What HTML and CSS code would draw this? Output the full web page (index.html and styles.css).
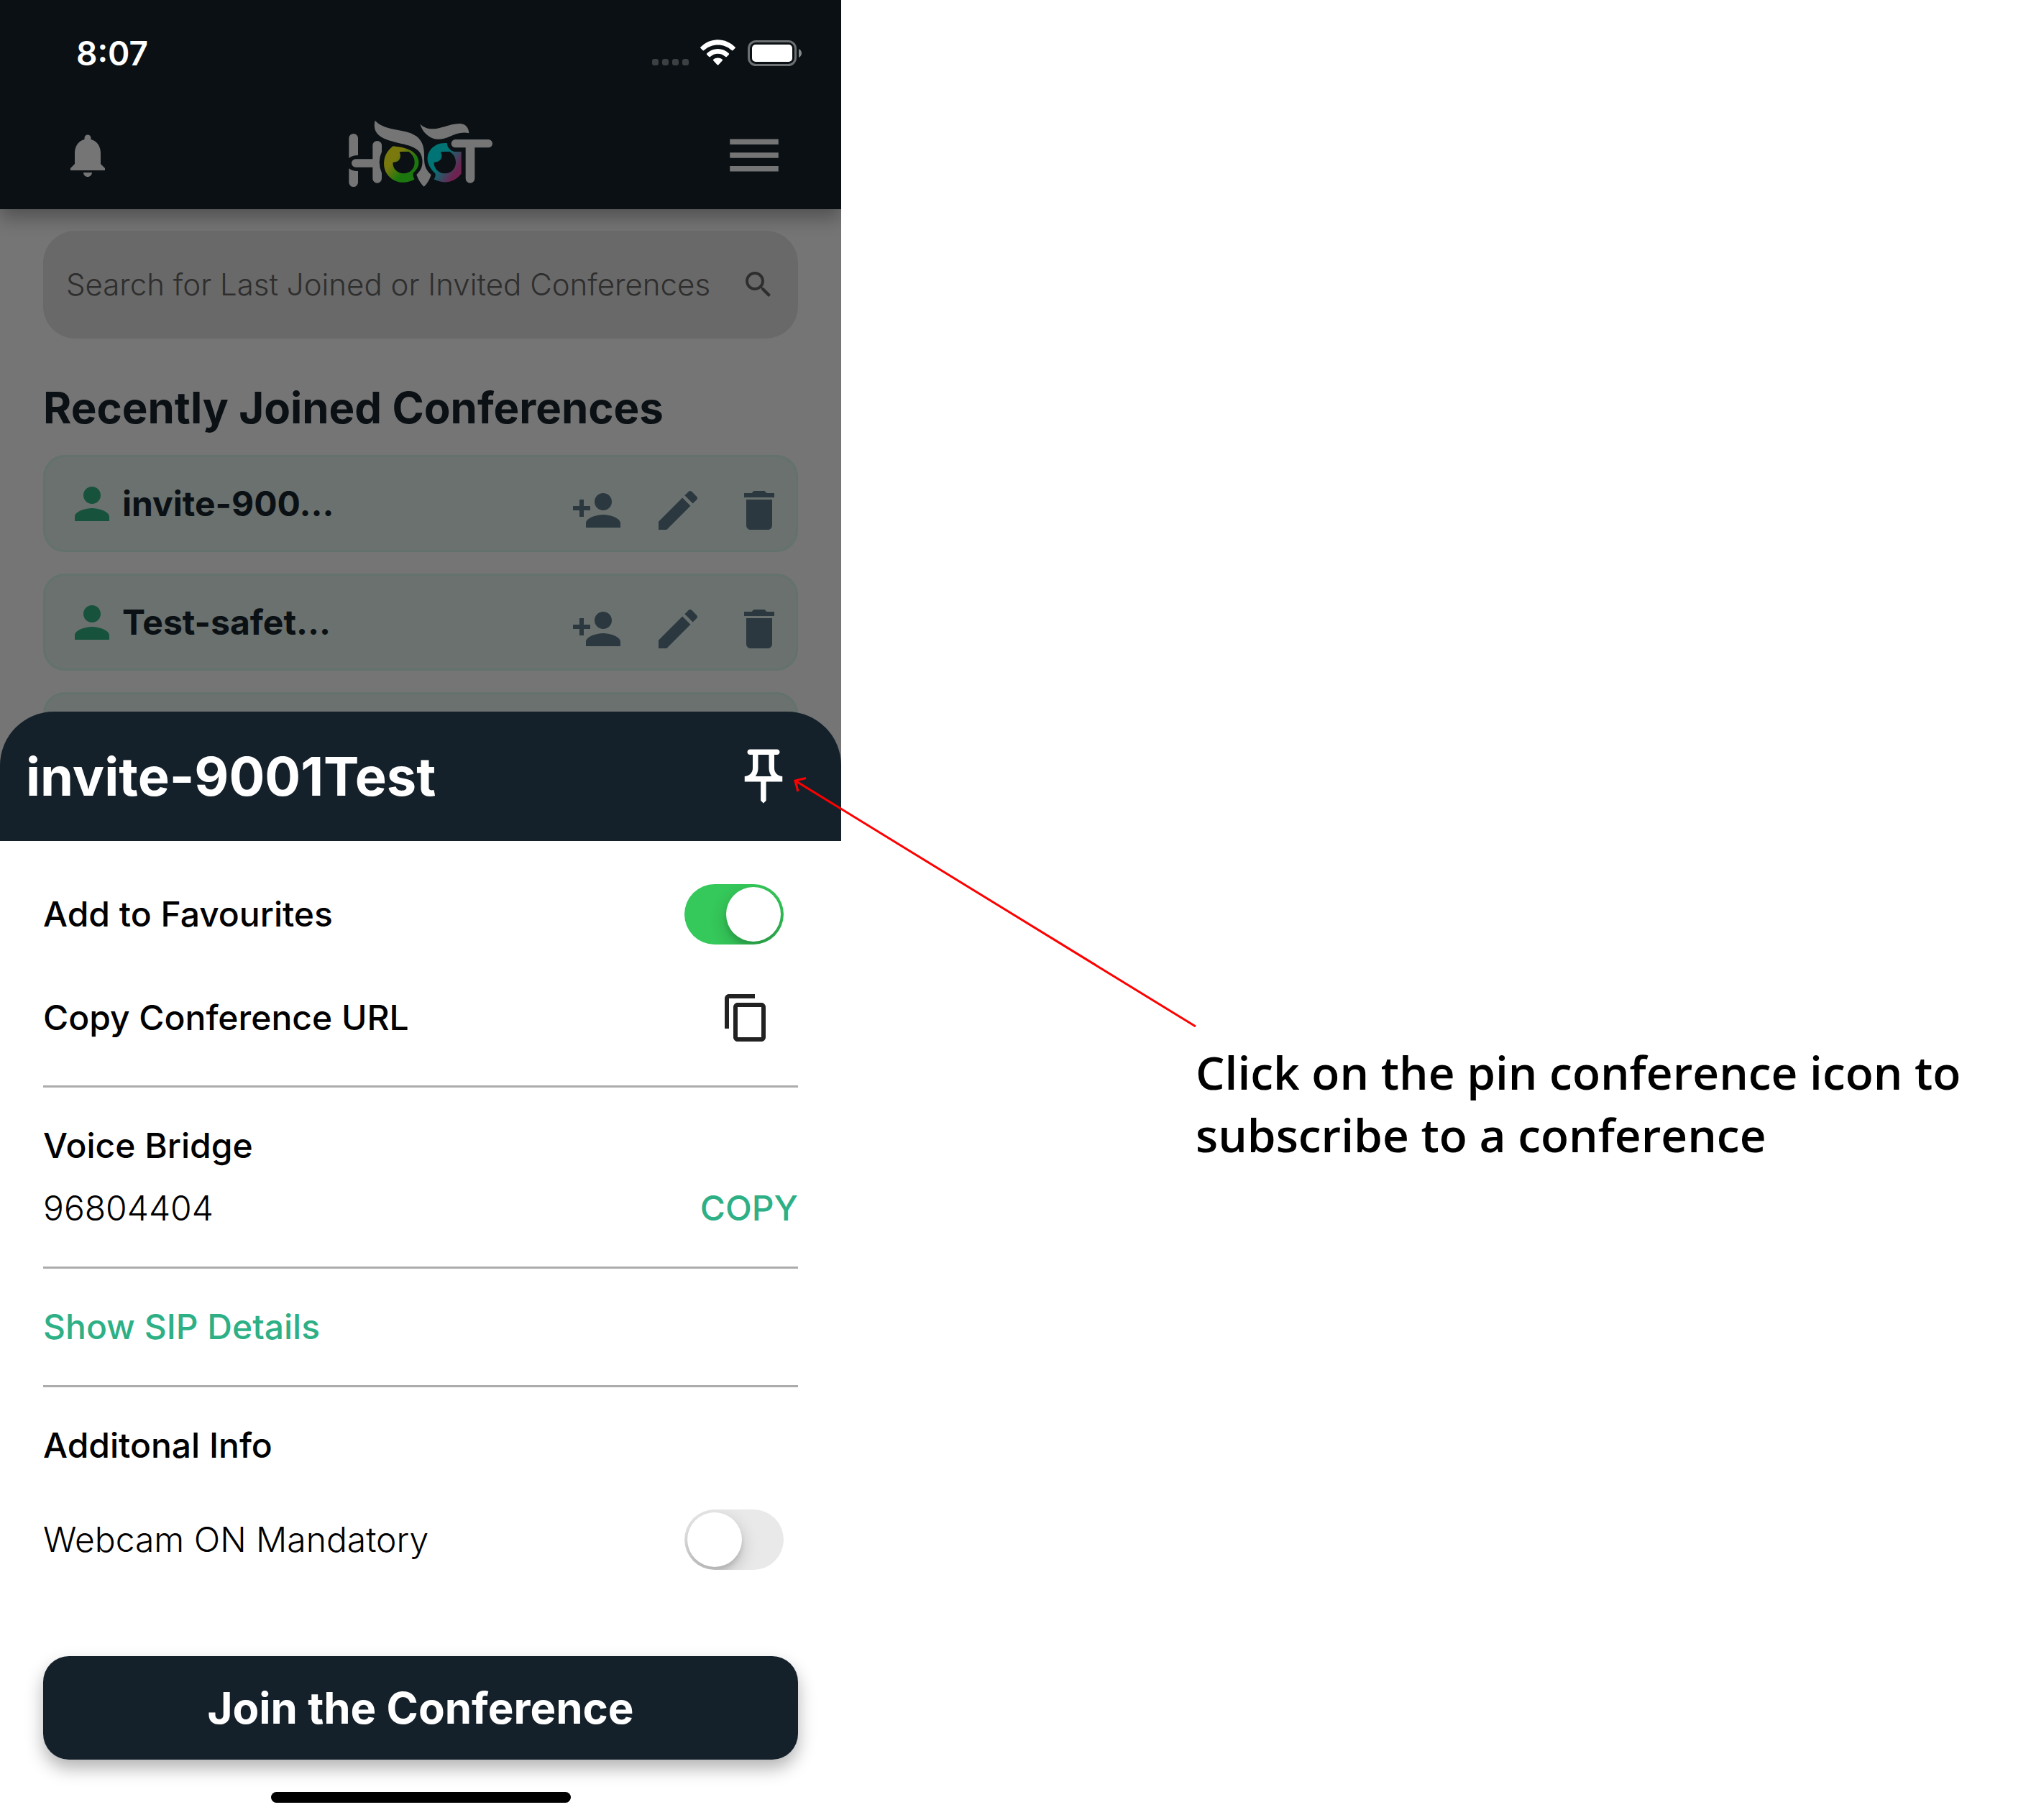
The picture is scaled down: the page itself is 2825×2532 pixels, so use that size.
FILE: index.html
```html
<!DOCTYPE html>
<html lang="en">
<head>
<meta charset="utf-8">
<meta name="viewport" content="width=device-width, initial-scale=1">
<title>Hoot – Pin a conference</title>
<link rel="stylesheet" href="styles.css">
</head>
<body>
<svg class="symbols" aria-hidden="true">
  <symbol id="person" viewBox="0 0 24 24"><path d="M12 12c2.21 0 4-1.79 4-4s-1.79-4-4-4-4 1.79-4 4 1.79 4 4 4zm0 2c-2.67 0-8 1.34-8 4v2h16v-2c0-2.66-5.33-4-8-4z"/></symbol>
  <symbol id="person-add" viewBox="0 0 24 24"><path d="M15 12c2.21 0 4-1.79 4-4s-1.79-4-4-4-4 1.79-4 4 1.79 4 4 4zm-9-2V7H4v3H1v2h3v3h2v-3h3v-2H6zm9 4c-2.67 0-8 1.34-8 4v2h16v-2c0-2.66-5.33-4-8-4z"/></symbol>
  <symbol id="edit" viewBox="0 0 24 24"><path d="M3 17.25V21h3.75L17.81 9.94l-3.75-3.75L3 17.25zM20.71 7.04c.39-.39.39-1.02 0-1.41l-2.34-2.34c-.39-.39-1.02-.39-1.41 0l-1.83 1.83 3.75 3.75 1.83-1.83z"/></symbol>
  <symbol id="delete" viewBox="0 0 24 24"><path d="M6 19c0 1.1.9 2 2 2h8c1.1 0 2-.9 2-2V7H6v12zM19 4h-3.500l-1-1h-5l-1 1H5v2h14V4z"/></symbol>
</svg>
<main class="page">
  <div class="phone">
    <div class="app">
      <header class="topbar">
        <div class="status">
          <span class="time">8:07</span>
          <svg class="status-icons" viewBox="0 0 210 40" aria-hidden="true">
            <g fill="#3c4042"><rect x="1" y="28" width="9" height="9" rx="3"/><rect x="15" y="28" width="9" height="9" rx="3"/><rect x="29" y="28" width="9" height="9" rx="3"/><rect x="43" y="28" width="9" height="9" rx="3"/></g>
            <g fill="#fff">
              <path d="M68.500 11.500C82 -2.300 103 -2.300 116.500 11.500q.8 .8 0 1.600l-3 3q-.8 .8-1.600 0C101 5.800 84 5.800 73.100 16.100q-.8 .8-1.600 0l-3-3q-.8-.8 0-1.600z"/>
              <path d="M77.200 20.300C86 12 99 12 107.800 20.300q.8 .8 0 1.600l-3 3q-.8 .8-1.600 0C97 19.200 88 19.200 81.800 24.900q-.8 .8-1.600 0l-3-3q-.8-.8 0-1.600z"/>
              <path d="M86.200 28.700c3.600-3 9-3 12.600 0q.8 .8 0 1.600l-5.500 5.900q-.8 .8-1.600 0l-5.500-5.900q-.8-.8 0-1.600z"/>
              <rect x="140" y="8" width="56" height="24" rx="5"/>
            </g>
            <rect x="135.500" y="3.500" width="65" height="33" rx="10" fill="none" stroke="#6c7072" stroke-width="3"/>
            <path d="M205 14q4 2 4 6t-4 6z" fill="#858889"/>
          </svg>
        </div>
        <div class="nav">
          <button class="icon-button nav-start" type="button" aria-label="Notifications">
            <svg class="icon" viewBox="0 0 24 24"><path d="M12 22c1.100 0 2-.9 2-2h-4c0 1.100.89 2 2 2zm6-6v-5c0-3.070-1.640-5.640-4.500-6.320V4c0-.83-.67-1.500-1.500-1.500s-1.500.67-1.500 1.500v.68C7.630 5.360 6 7.920 6 11v5l-2 2v1h16v-1l-2-2z"/></svg>
          </button>
          <svg class="logo" viewBox="74 48 606 300" role="img" aria-label="Hoot">
            <defs>
              <linearGradient id="eye-left" gradientUnits="userSpaceOnUse" x1="250" y1="200" x2="345" y2="280"><stop offset="0.200" stop-color="#79790d"/><stop offset="0.700" stop-color="#1c780e"/></linearGradient>
              <linearGradient id="eye-right" gradientUnits="userSpaceOnUse" x1="430" y1="200" x2="535" y2="265"><stop offset="0.300" stop-color="#007475"/><stop offset="0.950" stop-color="#6e2250"/></linearGradient>
            </defs>
            <g fill="#757575">
              <path d="M78 127a19 19 0 0 1 38 0V198q-24 0-38 12z"/>
              <path d="M78 253q14 12 38 11V311a19 19 0 0 1-38 0z"/>
              <path d="M106 214H177V157a19 19 0 0 1 38 0V184q-20 43 0 88V295a19 19 0 0 1-38 0V248H106a17 17 0 0 1 0-34z"/>
              <path d="M187 53C210 78 240 84 283 93C345 103 392 120 392 195V215C393 245 402 262 421 279C414 302 405 316 391 329C377 316 367 299 360 279C379 261 387 243 384 215C379 160 318 155 270 143C215 131 173 108 187 53z"/>
              <path d="M375 68C395 86 417 91 447 86C490 77 510 65 543 66C566 68 578 84 579 106C550 99 525 109 500 119C465 135 432 136 409 117C391 103 382 89 375 68z"/>
              <path d="M522 132H660a17 17 0 0 1 0 34H603V295a19 19 0 0 1-38 0V166H522a17 17 0 0 1 0-34z"/>
            </g>
            <path fill="url(#eye-left)" fill-rule="evenodd" d="M262 160C310 164 345 176 362 202C376 228 370 252 346 272Q343 286 352 298C330 312 300 316 274 306C235 290 220 255 225 220C229 193 243 175 262 160zM289 185C299 206 289 228 262 227C258 251 280 274 306 274C334 274 352 253 352 228C352 208 342 193 327 183H302Q295 182 289 185z"/>
            <path fill="url(#eye-right)" fill-rule="evenodd" d="M487 147Q488 172 516 183H547V275C520 309 476 322 432 298Q442 288 438 274C403 240 396 204 419 174C434 155 458 145 487 147zM461 185C472 206 460 228 433 227C431 252 452 274 479 274C505 274 524 253 524 228C524 208 514 192 498 183H474Q466 182 461 185z"/>
          </svg>
          <button class="icon-button nav-end" type="button" aria-label="Menu">
            <svg class="icon icon-large" viewBox="0 0 24 24"><path d="M3 18h18v-2H3v2zm0-5h18v-2H3v2zm0-7v2h18V6H3z"/></svg>
          </button>
        </div>
      </header>
      <div class="content">
        <label class="search">
          <input class="search-input" type="text" aria-label="Search conferences" placeholder="Search for Last Joined or Invited Conferences">
          <svg class="icon icon-small" viewBox="0 0 24 24" aria-hidden="true"><path d="M15.500 14h-.79l-.28-.27C15.410 12.590 16 11.110 16 9.500 16 5.910 13.090 3 9.500 3S3 5.910 3 9.500 5.910 16 9.500 16c1.610 0 3.090-.59 4.230-1.570l.27.28v.79l5 4.990L20.490 19l-4.990-5zm-6 0C7.010 14 5 11.990 5 9.500S7.010 5 9.500 5 14 7.010 14 9.500 11.990 14 9.500 14z"/></svg>
        </label>
        <h2 class="heading">Recently Joined Conferences</h2>
        <ul class="list">
          <li class="row">
            <svg class="icon avatar" aria-hidden="true"><use href="#person"/></svg>
            <span class="row-name">invite-900...</span>
            <span class="actions">
              <button class="icon-button" type="button" aria-label="Add person"><svg class="icon"><use href="#person-add"/></svg></button>
              <button class="icon-button" type="button" aria-label="Edit"><svg class="icon"><use href="#edit"/></svg></button>
              <button class="icon-button" type="button" aria-label="Delete"><svg class="icon"><use href="#delete"/></svg></button>
            </span>
          </li>
          <li class="row">
            <svg class="icon avatar" aria-hidden="true"><use href="#person"/></svg>
            <span class="row-name">Test-safet...</span>
            <span class="actions">
              <button class="icon-button" type="button" aria-label="Add person"><svg class="icon"><use href="#person-add"/></svg></button>
              <button class="icon-button" type="button" aria-label="Edit"><svg class="icon"><use href="#edit"/></svg></button>
              <button class="icon-button" type="button" aria-label="Delete"><svg class="icon"><use href="#delete"/></svg></button>
            </span>
          </li>
          <li class="row"></li>
        </ul>
      </div>
    </div>
    <section class="sheet">
      <header class="sheet-header">
        <h1 class="sheet-title">invite-9001Test</h1>
        <button class="icon-button pin" type="button" aria-label="Pin conference">
          <svg class="icon icon-large" viewBox="0 0 24 24"><path d="M14 4v5c0 1.120.37 2.160 1 3H9c.65-.86 1-1.900 1-3V4h4m3-2H7c-.55 0-1 .45-1 1s.45 1 1 1h1v5c0 1.660-1.340 3-3 3v2h5.970v7l1 1 1-1v-7H19v-2c-1.660 0-3-1.340-3-3V4h1c.55 0 1-.45 1-1s-.45-1-1-1z"/></svg>
        </button>
      </header>
      <div class="sheet-body">
        <div class="section section-first">
          <div class="line line-inset">
            <label class="label" for="favourite">Add to Favourites</label>
            <input class="toggle" id="favourite" type="checkbox" checked>
          </div>
          <div class="line line-copy">
            <span class="label">Copy Conference URL</span>
            <button class="icon-button" type="button" aria-label="Copy conference URL">
              <svg class="icon" viewBox="0 0 24 24"><path d="M16 1H4c-1.100 0-2 .9-2 2v14h2V3h12V1zm3 4H8c-1.100 0-2 .9-2 2v14c0 1.100.9 2 2 2h11c1.100 0 2-.9 2-2V7c0-1.100-.9-2-2-2zm0 16H8V7h11v14z"/></svg>
            </button>
          </div>
        </div>
        <div class="section section-bridge">
          <span class="label">Voice Bridge</span>
          <div class="line">
            <span class="value">96804404</span>
            <button class="text-button" type="button">COPY</button>
          </div>
        </div>
        <div class="section">
          <button class="text-button" type="button">Show SIP Details</button>
        </div>
        <div class="section section-last">
          <span class="label">Additonal Info</span>
          <div class="line line-inset">
            <label class="value" for="webcam">Webcam ON Mandatory</label>
            <input class="toggle" id="webcam" type="checkbox">
          </div>
        </div>
        <button class="join" type="button">Join the Conference</button>
        <div class="home-bar"></div>
      </div>
    </section>
  </div>
  <aside class="note">
    <svg class="arrow" viewBox="0 0 560 348" aria-hidden="true"><path d="M557 346L0 4M15 0.500L0 4l4 15"/></svg>
    <p class="note-text">Click on the pin conference icon to subscribe to a conference</p>
  </aside>
</main>
</body>
</html>
```
FILE: styles.css
```css
* { box-sizing: border-box; }

body {
  margin: 0;
  background: #fff;
  color: #000;
  font-family: Inter, "Liberation Sans", sans-serif;
}

h1, h2, p, ul { margin: 0; padding: 0; }
ul { list-style: none; }

button {
  margin: 0;
  padding: 0;
  border: 0;
  background: none;
  color: inherit;
  font: inherit;
  cursor: pointer;
}

.symbols { display: none; }

.page {
  display: flex;
  min-height: 100vh;
}

/* Phone: the dimmed app and the sheet share one grid cell */
.phone {
  display: grid;
  flex: 0 1 1170px;
  min-width: 0;
  overflow: hidden;
}
.app, .sheet { grid-area: 1 / 1; min-width: 0; }
.app { background: #757575; }
.sheet { align-self: end; z-index: 1; }

.icon {
  display: block;
  width: 72px;
  height: 72px;
  fill: currentColor;
}
.icon-small { width: 48px; height: 48px; }
.icon-large { width: 90px; height: 90px; }
.icon-button { flex: none; }

/* Top bar */
.topbar {
  background: #0a1014;
  color: #757575;
  box-shadow: 0 12px 24px rgba(0, 0, 0, 0.3);
}
.status {
  display: flex;
  align-items: center;
  justify-content: space-between;
  height: 141px;
  padding: 6px 54px 0 106px;
}
.time {
  color: #fff;
  font-size: 46px;
  font-weight: 600;
  line-height: 60px;
}
.status-icons { width: 210px; height: 40px; }
.nav {
  display: grid;
  grid-template-columns: 1fr auto 1fr;
  align-items: center;
  height: 150px;
  padding: 0 76px;
}
.nav-start { justify-self: start; padding-left: 10px; }
.nav-end { justify-self: end; }
.logo { width: 202px; height: 100px; }

/* Dimmed list */
.content { padding: 30px 60px 0; }
.search {
  display: flex;
  align-items: center;
  gap: 24px;
  height: 150px;
  padding: 0 31px 0 32px;
  border-radius: 45px;
  background: #696969;
  color: #2e2e2e;
}
.search-input {
  flex: 1;
  min-width: 0;
  padding: 0;
  border: 0;
  outline: 0;
  background: none;
  font: 300 42px/60px Inter, "Liberation Sans", sans-serif;
  color: #2e2e2e;
}
.search-input::placeholder { color: #2e2e2e; opacity: 1; }
.heading {
  padding: 60px 0 30px;
  color: #0a1014;
  font-size: 60px;
  font-weight: 700;
  line-height: 72px;
}
.list { display: grid; gap: 30px; }
.row {
  display: flex;
  align-items: center;
  height: 135px;
  padding: 0 15px 0 29px;
  border: 3px solid #63726d;
  border-radius: 30px;
  background: #6a716e;
}
.avatar { flex: none; color: #17523d; }
.row-name {
  flex: 1;
  padding-left: 6px;
  color: #0a1014;
  font-size: 48px;
  font-weight: 700;
  line-height: 60px;
}
.actions {
  display: flex;
  gap: 41px;
  padding-top: 18px;
  color: #2c3840;
}

/* Bottom sheet */
.sheet-header {
  display: flex;
  align-items: center;
  justify-content: space-between;
  height: 180px;
  padding: 0 63px 0 36px;
  border-radius: 75px 75px 0 0;
  background: #15212a;
  color: #fff;
}
.sheet-title {
  font-size: 74px;
  font-weight: 700;
  line-height: 90px;
}
.sheet-body {
  padding: 0 60px 24px;
  background: #fff;
}
.section {
  display: grid;
  justify-items: start;
  padding: 51px 0;
  border-bottom: 3px solid #acacac;
}
.section-first { gap: 66px; padding: 60px 0 58px; }
.section-bridge { gap: 27px; }
.section-last { gap: 59px; padding-bottom: 0; border-bottom: 0; }
.line {
  display: flex;
  align-items: center;
  justify-content: space-between;
  justify-self: stretch;
}
.line-inset { padding-right: 20px; }
.line-copy { padding-right: 36px; color: #222; }
.label {
  color: #000;
  font-size: 48px;
  font-weight: 500;
  line-height: 60px;
}
.value {
  font-size: 48px;
  font-weight: 300;
  line-height: 60px;
}
.text-button {
  color: #2eb086;
  font-size: 48px;
  font-weight: 500;
  line-height: 60px;
}

.toggle {
  display: flex;
  flex: none;
  align-items: center;
  width: 138px;
  height: 84px;
  margin: 0;
  padding: 4px;
  border-radius: 42px;
  background: #e9e9ea;
  appearance: none;
  overflow: hidden;
  cursor: pointer;
}
.toggle::before {
  content: "";
  width: 76px;
  height: 76px;
  border-radius: 50%;
  background: #fff;
  box-shadow: 0 9px 24px rgba(0, 0, 0, 0.2), 0 6px 6px rgba(0, 0, 0, 0.1);
}
.toggle:checked { justify-content: flex-end; background: #35c85a; }

.join {
  display: block;
  width: 100%;
  height: 144px;
  margin: 120px 0 45px;
  border-radius: 36px;
  background: #15212a;
  box-shadow: 0 12px 24px rgba(0, 0, 0, 0.3);
  color: #fff;
  font-size: 60px;
  font-weight: 700;
  line-height: 72px;
}
.home-bar {
  width: 417px;
  max-width: 100%;
  height: 15px;
  margin: 0 auto;
  border-radius: 8px;
  background: #000;
}

/* Callout beside the phone */
.note {
  position: relative;
  flex: 1;
  align-self: center;
  min-width: 0;
  padding: 538px 60px 0 493px;
}
.note-text {
  font-family: "Open Sans", "Noto Sans", sans-serif;
  font-size: 64px;
  font-weight: 600;
  line-height: 87px;
}
/* The arrow reaches from the text back over the phone to the pin */
.arrow {
  position: absolute;
  bottom: 192px;
  left: -64px;
  z-index: 2;
  width: 560px;
  height: 348px;
  overflow: visible;
  fill: none;
  stroke: #f00;
  stroke-width: 3;
}
```
